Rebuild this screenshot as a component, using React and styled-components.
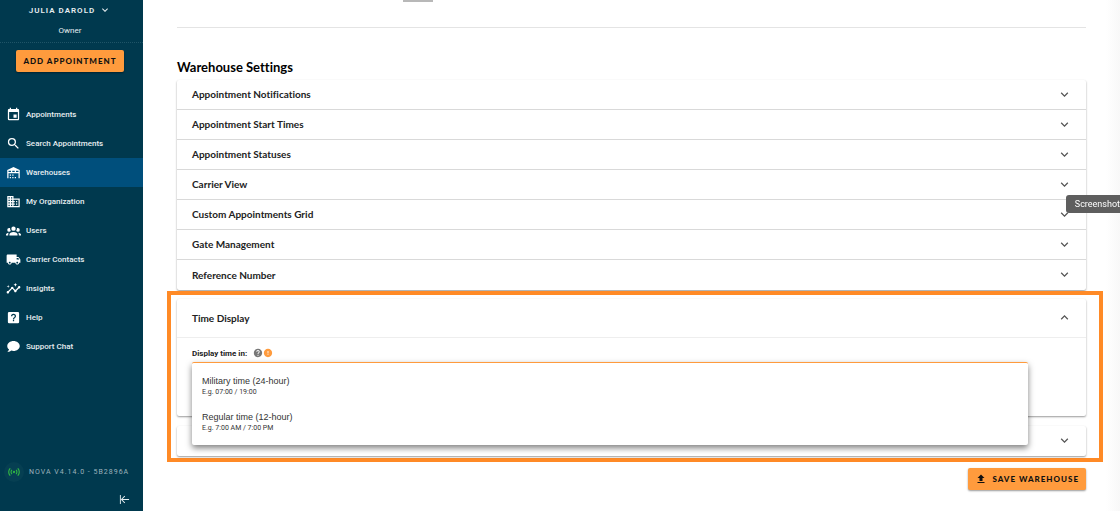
import React, { useState } from 'react';
import styled, { createGlobalStyle } from 'styled-components';
import {
  MdDomain,
  MdError,
  MdEvent,
  MdExpandLess,
  MdExpandMore,
  MdHelp,
  MdInsights,
  MdLocalShipping,
  MdSearch
} from 'react-icons/md';

const heading = 'Lato, "Open Sans", sans-serif';
const text = 'Roboto, "Liberation Sans", sans-serif';

const GlobalStyle = createGlobalStyle`
  * {
    box-sizing: border-box;
  }
  body {
    margin: 0;
    background: #fff;
    color: #222;
    font-family: ${text};
    font-variant-ligatures: none;
  }
  button {
    padding: 0;
    border: 0;
    background: none;
    color: inherit;
    font: inherit;
    font-variant-ligatures: none;
    cursor: pointer;
  }
`;

const paths = {
  warehouse: 'M6 19H8V21H6V19M12 3L2 8V21H4V13H20V21H22V8L12 3M8 11H4V9H8V11M14 11H10V9H14V11M20 11H16V9H20V11M6 15H8V17H6V15M10 15H12V17H10V15M10 19H12V21H10V19M14 19H16V21H14V19Z',
  group: 'M12,5.5A3.5,3.5 0 0,1 15.5,9A3.5,3.5 0 0,1 12,12.5A3.5,3.5 0 0,1 8.5,9A3.5,3.5 0 0,1 12,5.5M5,8C5.56,8 6.08,8.15 6.53,8.42C6.38,9.85 6.8,11.27 7.66,12.38C7.16,13.34 6.16,14 5,14A3,3 0 0,1 2,11A3,3 0 0,1 5,8M19,8A3,3 0 0,1 22,11A3,3 0 0,1 19,14C17.84,14 16.84,13.34 16.34,12.38C17.2,11.27 17.62,9.85 17.47,8.42C17.92,8.15 18.44,8 19,8M5.5,18.25C5.5,16.18 8.41,14.5 12,14.5C15.59,14.5 18.5,16.18 18.5,18.25V20H5.5V18.25M0,20V18.5C0,17.11 1.89,15.94 4.45,15.6C3.86,16.28 3.5,17.22 3.5,18.25V20H0M24,20H20.5V18.25C20.5,17.22 20.14,16.28 19.55,15.6C22.11,15.94 24,17.11 24,18.5V20Z',
  help: 'M11,18H13V16H11V18M12,6A4,4 0 0,0 8,10H10A2,2 0 0,1 12,8A2,2 0 0,1 14,10C14,12 11,11.75 11,15H13C13,12.75 16,12.5 16,10A4,4 0 0,0 12,6M5,3H19A2,2 0 0,1 21,5V19A2,2 0 0,1 19,21H5A2,2 0 0,1 3,19V5A2,2 0 0,1 5,3Z',
  chat: 'M12,3C17.5,3 22,6.58 22,11C22,15.42 17.5,19 12,19C10.76,19 9.57,18.82 8.47,18.5C5.55,21 2,21 2,21C4.33,18.67 4.7,17.1 4.75,16.5C3.05,15.07 2,13.13 2,11C2,6.58 6.5,3 12,3Z',
  signal: 'M4.93,4.93C3.12,6.74 2,9.24 2,12C2,14.76 3.12,17.26 4.93,19.07L6.34,17.66C4.89,16.22 4,14.22 4,12C4,9.79 4.89,7.78 6.34,6.34L4.93,4.93M19.07,4.93L17.66,6.34C19.11,7.78 20,9.79 20,12C20,14.22 19.11,16.22 17.66,17.66L19.07,19.07C20.88,17.26 22,14.76 22,12C22,9.24 20.88,6.74 19.07,4.93M7.76,7.76C6.67,8.85 6,10.35 6,12C6,13.65 6.67,15.15 7.76,16.24L9.17,14.83C8.45,14.11 8,13.11 8,12C8,10.89 8.45,9.89 9.17,9.17L7.76,7.76M16.24,7.76L14.83,9.17C15.55,9.89 16,10.89 16,12C16,13.11 15.55,14.11 14.83,14.83L16.24,16.24C17.33,15.15 18,13.65 18,12C18,10.35 17.33,8.85 16.24,7.76M12,10A2,2 0 0,0 10,12A2,2 0 0,0 12,14A2,2 0 0,0 14,12A2,2 0 0,0 12,10Z',
  collapse: 'M11.92,19.92L4,12L11.92,4.08L13.33,5.5L7.83,11H22V13H7.83L13.34,18.5L11.92,19.92M4,12V2H2V22H4V12Z',
  upload: 'M9,16V10H5L12,3L19,10H15V16H9M5,20V18H19V20H5Z'
};

const Icon = ({ name, size }) => (
  <svg width={size} height={size} viewBox="0 0 24 24" fill="currentColor" aria-hidden="true">
    <path d={paths[name]} />
  </svg>
);

const Layout = styled.div`
  display: flex;
  min-height: 100vh;
`;

const Sidebar = styled.aside`
  display: flex;
  flex: 0 0 143px;
  flex-direction: column;
  min-width: 0;
  background: #00394e;
  color: #e6edf0;
`;

const Account = styled.div`
  display: flex;
  flex-direction: column;
  align-items: center;
  height: 43px;
  padding-right: 3px;
  border-bottom: 1px dotted #1f5467;
`;

const AccountName = styled.button`
  display: flex;
  align-items: center;
  gap: 4px;
  height: 20px;
  font-size: 8px;
  font-weight: 600;
  letter-spacing: 1px;
`;

const Role = styled.span`
  margin-top: 5px;
  font-size: 8px;
  line-height: 12px;
`;

const PrimaryButton = styled.button`
  display: flex;
  align-items: center;
  justify-content: center;
  gap: 5px;
  height: 22px;
  padding: 0 7px;
  border-radius: 2px;
  background: #ff9b3d;
  box-shadow: 0 1px 2px rgba(0, 0, 0, 0.4);
  color: #111;
  font-family: ${heading};
  font-size: 8px;
  font-weight: 900;
  letter-spacing: 1px;
  white-space: nowrap;
`;

const AddAppointment = styled(PrimaryButton)`
  margin: 7px 19px 28px 16px;
`;

const NavLink = styled.a`
  display: flex;
  align-items: center;
  gap: 5px;
  height: 29px;
  padding-left: 6px;
  background: ${(props) => (props.$active ? '#004f7c' : 'transparent')};
  color: inherit;
  font-size: 8px;
  font-weight: 500;
  text-decoration: none;
  svg {
    color: #fff;
  }
`;

const Version = styled.div`
  display: flex;
  align-items: center;
  gap: 5px;
  margin-top: auto;
  padding-left: 4px;
  color: #9db3bc;
  font-size: 7px;
  letter-spacing: 1px;
  white-space: nowrap;
`;

const Signal = styled.span`
  display: flex;
  align-items: center;
  justify-content: center;
  width: 20px;
  height: 20px;
  border-radius: 50%;
  background: #063f52;
  color: #2fb344;
`;

const Collapse = styled.button`
  display: flex;
  align-self: flex-end;
  margin: 12px 13px 6px 0;
`;

const Main = styled.main`
  flex: 1;
  min-width: 0;
  padding: 0 34px 20px;
  background: linear-gradient(to left, #f8f8f8, #fff 14px);
`;

const TabBar = styled.div`
  height: 28px;
  padding-left: 226px;
  border-bottom: 1px solid #e4e4e4;
`;

const TabMarker = styled.div`
  width: 30px;
  height: 2px;
  background: #b8b8b8;
`;

const Title = styled.h2`
  margin: 31px 0 4px;
  font-family: ${heading};
  font-size: 13px;
  font-weight: 700;
  line-height: 17px;
  color: #000;
`;

const Panel = styled.section`
  border-radius: 2px;
  background: #fff;
  box-shadow: 0 1px 2px rgba(0, 0, 0, 0.4);
`;

const PanelHeader = styled.button`
  display: flex;
  align-items: center;
  justify-content: space-between;
  width: 100%;
  height: ${(props) => (props.$open ? 39 : 30)}px;
  padding: 0 14px 1px 15px;
  font-family: ${heading};
  font-size: 10px;
  font-weight: 700;
  text-align: left;
  &:not(:last-child) {
    border-bottom: 1px solid ${(props) => (props.$open ? '#eee' : '#d9d9d9')};
  }
  svg {
    margin-left: auto;
    color: #555;
  }
`;

const Highlight = styled.div`
  display: flex;
  flex-direction: column;
  gap: 10px;
  margin: 1px -17px 6px -10px;
  padding: 4px 13px 2px 6px;
  border: 4px solid #ff8a26;
`;

const Field = styled.div`
  position: relative;
  height: 78px;
  padding: 9px 15px;
`;

const FieldLabel = styled.div`
  display: flex;
  align-items: center;
  height: 12px;
  font-size: 8px;
  font-weight: 700;
  span {
    margin-right: 6px;
  }
`;

const Options = styled.ul`
  position: absolute;
  top: 24px;
  right: 58px;
  left: 15px;
  z-index: 1;
  margin: 0;
  padding: 5px 0;
  border-top: 1px solid #ff9b3d;
  border-radius: 2px;
  background: #fff;
  box-shadow: 0 3px 6px rgba(0, 0, 0, 0.5);
  list-style: none;
`;

const Option = styled.li`
  display: flex;
  flex-direction: column;
  justify-content: center;
  height: 36px;
  padding: 0 10px;
  color: #333;
  font-family: "Liberation Sans", sans-serif;
  font-size: 9px;
  line-height: 12px;
  cursor: pointer;
  small {
    font-family: ${text};
    font-size: 7px;
    line-height: 10px;
  }
`;

const Actions = styled.div`
  display: flex;
  justify-content: flex-end;
`;

const Tooltip = styled.div`
  position: fixed;
  top: 195px;
  right: 0;
  z-index: 2;
  height: 18px;
  padding: 0 0 0 9px;
  border-radius: 3px 0 0 3px;
  background: #5e5e5e;
  color: #fff;
  font-size: 9px;
  line-height: 18px;
`;

const links = [
  { label: 'Appointments', icon: <MdEvent size={15} /> },
  { label: 'Search Appointments', icon: <MdSearch size={15} /> },
  { label: 'Warehouses', icon: <Icon name="warehouse" size={15} />, active: true },
  { label: 'My Organization', icon: <MdDomain size={15} /> },
  { label: 'Users', icon: <Icon name="group" size={15} /> },
  { label: 'Carrier Contacts', icon: <MdLocalShipping size={15} /> },
  { label: 'Insights', icon: <MdInsights size={15} /> },
  { label: 'Help', icon: <Icon name="help" size={15} /> },
  { label: 'Support Chat', icon: <Icon name="chat" size={15} /> }
];

const settings = [
  'Appointment Notifications',
  'Appointment Start Times',
  'Appointment Statuses',
  'Carrier View',
  'Custom Appointments Grid',
  'Gate Management',
  'Reference Number'
];

const formats = [
  { name: 'Military time (24-hour)', example: 'E.g. 07:00 / 19:00' },
  { name: 'Regular time (12-hour)', example: 'E.g. 7:00 AM / 7:00 PM' }
];

const App = () => {
  const [format, setFormat] = useState(null);

  return (
    <Layout>
      <GlobalStyle />
      <Sidebar>
        <Account>
          <AccountName>
            JULIA DAROLD
            <MdExpandMore size={12} />
          </AccountName>
          <Role>Owner</Role>
        </Account>
        <AddAppointment>ADD APPOINTMENT</AddAppointment>
        <nav>
          {links.map(({ label, icon, active }) => (
            <NavLink key={label} href="#" $active={active}>
              {icon}
              {label}
            </NavLink>
          ))}
        </nav>
        <Version>
          <Signal><Icon name="signal" size={14} /></Signal>
          NOVA V4.14.0 - 5B2896A
        </Version>
        <Collapse aria-label="Collapse menu"><Icon name="collapse" size={11} /></Collapse>
      </Sidebar>

      <Main>
        <TabBar><TabMarker /></TabBar>
        <Title>Warehouse Settings</Title>
        <Panel>
          {settings.map((name) => (
            <PanelHeader key={name}>
              {name}
              <MdExpandMore size={15} />
            </PanelHeader>
          ))}
        </Panel>

        <Highlight>
          <Panel>
            <PanelHeader $open aria-expanded="true">
              Time Display
              <MdExpandLess size={15} />
            </PanelHeader>
            <Field>
              <FieldLabel>
                <span id="time-format">Display time in:</span>
                <MdHelp size={10} color="#777" />
                <MdError size={10} color="#ff9b3d" />
              </FieldLabel>
              <Options role="listbox" aria-labelledby="time-format">
                {formats.map(({ name, example }) => (
                  <Option
                    key={name}
                    role="option"
                    tabIndex={0}
                    aria-selected={format === name}
                    onClick={() => setFormat(name)}
                  >
                    {name}
                    <small>{example}</small>
                  </Option>
                ))}
              </Options>
            </Field>
          </Panel>
          <Panel>
            <PanelHeader aria-label="Expand section"><MdExpandMore size={15} /></PanelHeader>
          </Panel>
        </Highlight>

        <Actions>
          <PrimaryButton>
            <Icon name="upload" size={12} />
            SAVE WAREHOUSE
          </PrimaryButton>
        </Actions>
      </Main>
      <Tooltip role="tooltip">Screenshot</Tooltip>
    </Layout>
  );
};

export default App;
